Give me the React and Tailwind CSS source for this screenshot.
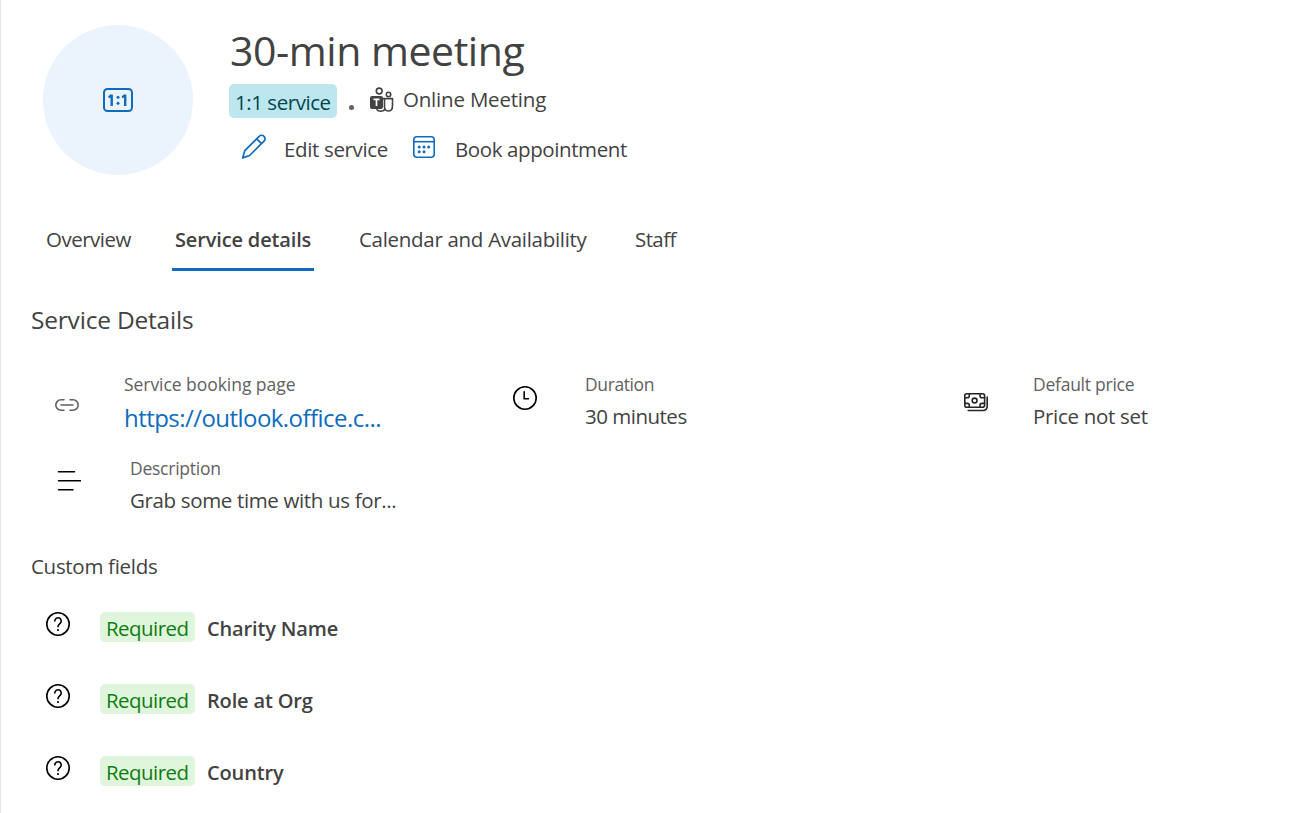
import React from "react";

const tabs = [
  { label: "Overview", width: "w-[87px]", tracking: "tracking-[-0.5px]" },
  { label: "Service details", width: "w-[142px]", tracking: "tracking-[-0.15px]" },
  { label: "Calendar and Availability", width: "w-[234px]", tracking: "tracking-[-0.3px]" },
  { label: "Staff", width: "w-[48px]", tracking: "tracking-[-0.6px]" },
];

const customFields = ["Charity Name", "Role at Org", "Country"];

function OneToOneIcon() {
  return (
    <svg width="30" height="24" viewBox="0 0 30 24" fill="none" stroke="#0f6cbd" strokeWidth="2">
      <rect x="1" y="1" width="28" height="22" rx="3.5" />
      <path d="M5.500 9.200c1.500-.4 2.600-1.200 3.200-2.400V18M19 9.200c1.500-.4 2.600-1.200 3.200-2.400V18" strokeWidth="2.400" />
      <circle cx="15" cy="9.300" r="1.500" fill="#0f6cbd" stroke="none" />
      <circle cx="15" cy="15.300" r="1.500" fill="#0f6cbd" stroke="none" />
    </svg>
  );
}

function TeamsIcon() {
  return (
    <svg width="24" height="26" viewBox="0 0 24 26" fill="none" stroke="#424242" strokeWidth="1.6">
      <circle cx="9.200" cy="4" r="2.900" />
      <circle cx="18.500" cy="7.500" r="2.200" />
      <path d="M12.500 11.600h10v7.400c0 3.200-1.900 5-4.300 5s-3.700-1.800-3.700-4.400v-8" strokeLinejoin="round" />
      <path d="M6.500 22.300c1 1.200 2.200 1.900 4 1.900 2.200 0 4-.8 4.600-2.400" />
      <rect x="0" y="9" width="13" height="13" rx="2" fill="#424242" stroke="none" />
      <path d="M3.500 12.400h6M6.500 12.400v6.700" stroke="#fff" strokeWidth="1.700" />
    </svg>
  );
}

function PencilIcon() {
  return (
    <svg width="26" height="26" viewBox="0 0 26 26" fill="none" stroke="#0f6cbd" strokeWidth="1.7" strokeLinejoin="round">
      <path d="M18.200 2.300a3.300 3.300 0 0 1 4.800 0 3.300 3.300 0 0 1 0 4.800L8.600 21.500 1.600 23.900 3.800 16.700Z" />
      <path d="M15.700 4.800l4.800 4.800" />
    </svg>
  );
}

function CalendarIcon() {
  return (
    <svg width="22" height="22" viewBox="0 0 22 22" fill="none" stroke="#0f6cbd" strokeWidth="1.6">
      <rect x="0.800" y="0.800" width="20.400" height="20.400" rx="3" />
      <path d="M1 5.700h20" />
      <g fill="#0f6cbd" stroke="none">
        <circle cx="6.200" cy="11" r="1.500" />
        <circle cx="11" cy="11" r="1.500" />
        <circle cx="15.700" cy="11" r="1.500" />
        <circle cx="6.200" cy="15.700" r="1.500" />
        <circle cx="11" cy="15.700" r="1.500" />
      </g>
    </svg>
  );
}

function LinkIcon() {
  return (
    <svg width="24" height="12" viewBox="0 0 24 12" fill="none" stroke="#616161" strokeWidth="1.6" strokeLinecap="round">
      <path d="M9 .8H6a5.200 5.200 0 0 0 0 10.400h3M15 .8h3a5.200 5.200 0 0 1 0 10.400h-3M6 6h12" />
    </svg>
  );
}

function ClockIcon() {
  return (
    <svg width="24" height="24" viewBox="0 0 24 24" fill="none" stroke="#000" strokeWidth="1.6" strokeLinecap="round">
      <circle cx="12" cy="12" r="11.200" />
      <path d="M11.200 5.700v7h4.300" />
    </svg>
  );
}

function MoneyIcon() {
  return (
    <svg width="24" height="19" viewBox="0 0 24 19" fill="none" stroke="#242424" strokeWidth="1.6" strokeLinecap="round">
      <rect x="0.800" y="0.800" width="19.800" height="13.400" rx="2" />
      <path d="M5.300 1v1.800c0 1.200-.8 2-2 2H1M16 1v1.800c0 1.200.8 2 2 2h2.500M5.300 14v-1.600c0-1.200-.8-2-2-2H1M16 14v-1.600c0-1.200.8-2 2-2h2.500" />
      <circle cx="10.600" cy="7.500" r="2.400" />
      <path d="M23.200 4v9c0 2.800-1.600 4.500-4.400 4.500H4.200" />
    </svg>
  );
}

function TextIcon() {
  return (
    <svg width="25" height="21" viewBox="0 0 25 21" fill="none" stroke="#000" strokeWidth="1.600" strokeLinecap="round">
      <path d="M2.500 .8h16M2.500 9.800h22M2.500 18.800h14.500" />
    </svg>
  );
}

function QuestionIcon() {
  return (
    <svg width="24" height="24" viewBox="0 0 24 24" fill="none" stroke="#000" strokeWidth="1.600" strokeLinecap="round">
      <circle cx="12" cy="12" r="11.200" />
      <path d="M8.800 9a3.200 3.200 0 1 1 5.300 2.400c-1.200 1-2.100 1.700-2.100 3.400" />
      <circle cx="12" cy="18" r="1.100" fill="#000" stroke="none" />
    </svg>
  );
}

function Header() {
  return (
    <div className="flex h-[175px] pl-[42px]">
      <div className="mt-[25px] flex size-[150px] items-center justify-center rounded-full bg-[#ebf3fc]">
        <OneToOneIcon />
      </div>
      <div className="ml-9 pt-5">
        <h1 className="h-16 pl-px text-[41px] leading-[60px] tracking-[-0.45px]">30-min meeting</h1>
        <div className="flex h-[34px]">
          <span className="w-[108px] rounded-[5px] bg-[#bde6ee] pt-px pl-[6px] leading-[34px] tracking-[-0.45px] text-[#00474f]">
            1:1 service
          </span>
          <span className="mt-[21px] ml-3 size-[5px] rounded-full bg-[#616161]" />
          <span className="mt-[3px] ml-[16px]">
            <TeamsIcon />
          </span>
          <span className="ml-[9px] leading-[31px] tracking-[-0.2px]">Online Meeting</span>
        </div>
        <div className="flex h-[62px] leading-[62px]">
          <span className="mt-4 ml-3">
            <PencilIcon />
          </span>
          <span className="ml-[17px] w-[129px] tracking-[-0.35px]">Edit service</span>
          <span className="mt-[18px]">
            <CalendarIcon />
          </span>
          <span className="ml-5 tracking-[-0.4px]">Book appointment</span>
        </div>
      </div>
    </div>
  );
}

function Detail({ label, tracking, children }) {
  return (
    <div>
      <div className={`h-[34px] text-[17.5px] leading-[26px] text-[#616161] ${tracking}`}>{label}</div>
      {children}
    </div>
  );
}

export default function App() {
  return (
    <div className="h-[813px] w-[1316px] overflow-hidden border-l border-[#e5e5e5] bg-white font-['Open_Sans','Noto_Sans',sans-serif] text-[20.5px] whitespace-nowrap text-[#424242]">
      <Header />

      <nav className="mt-[31px] flex gap-[42px] pl-[42px]">
        {tabs.map((tab) => (
          <div
            key={tab.label}
            className={
              tab.label === "Service details"
                ? `h-[65px] border-b-3 border-[#0f6cbd] pl-[3px] text-[20px] leading-[67px] font-semibold ${tab.width} ${tab.tracking}`
                : `h-[65px] pl-[3px] leading-[66px] ${tab.width} ${tab.tracking}`
            }
          >
            {tab.label}
          </div>
        ))}
      </nav>

      <h2 className="mt-[29px] ml-[30px] h-[71px] text-[24.5px] leading-[40px] tracking-[-0.2px]">Service Details</h2>

      <div className="flex h-[84px] pl-[54px]">
        <div className="w-[69px] pt-7">
          <LinkIcon />
        </div>
        <div className="w-[389px]">
          <Detail label="Service booking page" tracking="tracking-[-0.05px]">
            <a className="block text-[24px] leading-[26px] tracking-[-0.55px] text-[#0f6cbd]">https://outlook.office.c...</a>
          </Detail>
        </div>
        <div className="w-[72px] pt-[15px]">
          <ClockIcon />
        </div>
        <div className="w-[379px]">
          <Detail label="Duration" tracking="tracking-[-0.4px]">
            <p className="leading-[23px] tracking-[-0.5px]">30 minutes</p>
          </Detail>
        </div>
        <div className="w-[69px] pt-[22px]">
          <MoneyIcon />
        </div>
        <Detail label="Default price" tracking="tracking-[-0.25px]">
          <p className="leading-[23px] tracking-[-0.3px]">Price not set</p>
        </Detail>
      </div>

      <div className="flex h-[91px] pl-[55px]">
        <div className="w-[74px] pt-4">
          <TextIcon />
        </div>
        <Detail label="Description" tracking="tracking-[-0.25px]">
          <p className="leading-[23px] tracking-[-0.35px]">Grab some time with us for...</p>
        </Detail>
      </div>

      <h3 className="ml-[30px] h-[66px] leading-[40px] tracking-[-0.3px]">Custom fields</h3>
      {customFields.map((field) => (
        <div key={field} className="flex h-[72px] pl-[45px]">
          <QuestionIcon />
          <span className="ml-[30px] h-[30px] w-[95px] rounded-[5px] bg-[#dff6dd] pt-px pl-[6px] leading-[30px] tracking-[-0.55px] text-[#107c10]">
            Required
          </span>
          <span className="ml-3 text-[20px] leading-[34px] font-semibold tracking-[-0.15px]">{field}</span>
        </div>
      ))}
    </div>
  );
}
